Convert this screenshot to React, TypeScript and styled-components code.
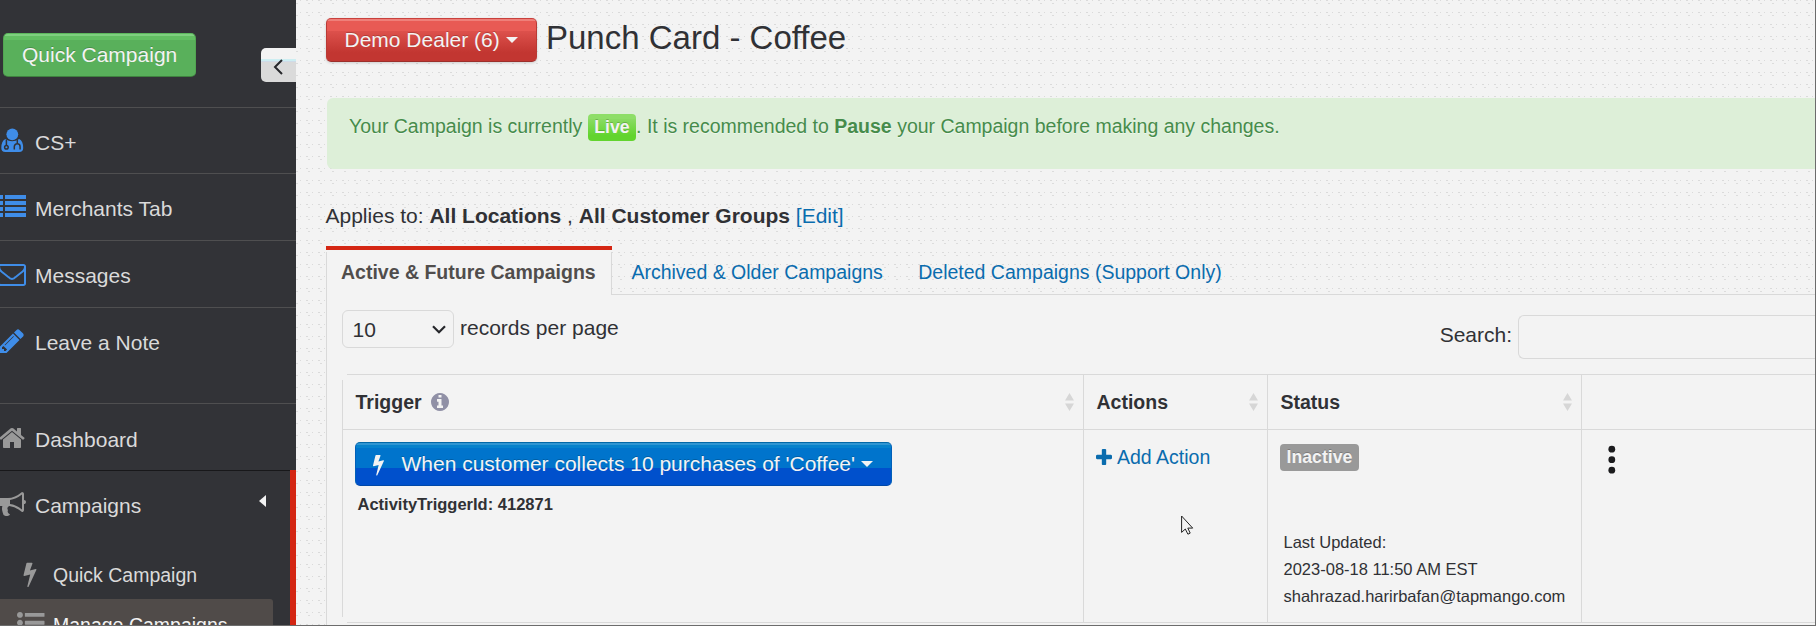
import React from "react";
import styled, { createGlobalStyle, css } from "styled-components";

const line = "#d9d9d9";
const paper = "#f3f3f3";

const Global = createGlobalStyle`
  * { box-sizing: border-box; }
  html, body, #root { height: 100%; }
  body {
    margin: 0;
    overflow: hidden;
    font-family: "Liberation Sans", Arial, sans-serif;
    font-size: 21px;
    line-height: 30px;
    color: #303135;
  }
`;

const Page = styled.div`
  display: flex;
  width: 1816px;
  height: 626px;
  overflow: hidden;
  border-right: 1px solid #6c6c6c;
  border-bottom: 1px solid #6c6c6c;
  background:
    conic-gradient(from 270deg at 1px 1px, #dadada 90deg, transparent 0) 0 0 / 12px 12px,
    conic-gradient(from 270deg at 2px 1px, #dadada 90deg, transparent 0) 6px 0 / 12px 12px,
    conic-gradient(from 270deg at 2px 1px, #dcdcdc 90deg, transparent 0) 8px 3px / 12px 12px,
    ${paper};
`;

const Sidebar = styled.aside`
  flex: 0 0 296px;
  height: 100%;
  overflow: hidden;
  background: #323337;
  color: #dadada;
`;

const SidebarTop = styled.div`
  display: flex;
  justify-content: space-between;
  align-items: flex-start;
  height: 107px;
  padding: 33px 0 0 3px;
`;

const Button = styled.button<{ $tone: "green" | "red" | "blue" }>`
  display: flex;
  align-items: center;
  flex: none;
  height: 44px;
  padding: 0 18px;
  border-radius: 5px;
  border: 1px solid;
  font-family: inherit;
  font-size: 21px;
  line-height: 30px;
  color: #f3f3f3;
  white-space: nowrap;
  ${(p) =>
    p.$tone === "green" &&
    css`
      width: 193px;
      border-color: #5cb85c #52a552 #3f823f;
      background: linear-gradient(#7fd07f 0 2px, #62bf62 2px 6px, #59b05b 6px);
    `}
  ${(p) =>
    p.$tone === "red" &&
    css`
      width: 211px;
      padding: 0 17.5px;
      border-color: #c8403c #b93a35 #9c2f2b;
      background: linear-gradient(#ef7f79 0 2px, #e85a54 2px 12px, #dd514c 12px, #c23631 80%);
      box-shadow: 0 1px 3px rgba(0, 0, 0, 0.16);
    `}
  ${(p) =>
    p.$tone === "blue" &&
    css`
      width: 537px;
      gap: 17.5px;
      padding: 0 17px;
      border-color: #0268a8 #0160b8 #0048a8;
      background: linear-gradient(#2f95d2 0 2px, #0682cc 2px 5px, #0074cc 5px 25px, #0050cc 25px);
    `}
`;

const ButtonText = styled.span`
  display: flex;
  align-items: center;
  text-shadow: 0 -1px 0 rgba(0, 0, 0, 0.2);
`;

const Caret = styled.i`
  margin: 0 0 1px 6px;
  border: 6px solid transparent;
  border-top-color: #f3f3f3;
  border-bottom: 0;
`;

const Collapse = styled.button`
  display: flex;
  align-items: center;
  width: 35px;
  height: 34px;
  margin-top: 15px;
  padding: 3px 0 0 12px;
  border: 0;
  border-radius: 5px 0 0 5px;
  background: linear-gradient(#f3f3f3 0 11px, #cdeef2 11px 13px, #cfdbe8 13px 14px, #dadada 14px);
`;

const Item = styled.a<{ $height?: number; $rule?: string; $top?: number }>`
  display: flex;
  align-items: flex-start;
  height: ${(p) => p.$height ?? 67}px;
  padding-top: ${(p) => p.$top ?? 19}px;
  border-top: 1px solid ${(p) => p.$rule ?? "#4f4f50"};
`;

const ItemIcon = styled.span`
  flex: 0 0 37px;
  height: 28px;
  margin-left: -2px;
  line-height: 0;
  svg { display: block; }
`;

const ItemText = styled.span`
  flex: 1;
  padding-top: 1px;
  white-space: nowrap;
`;

const OpenSection = styled.div`
  height: 160px;
  border-right: 6px solid #d42613;
`;

const OpenArrow = styled.i`
  margin: 5px 24px 0 0;
  border: 6px solid transparent;
  border-right: 7px solid #f3f3f3;
  border-left: 0;
`;

const SubItem = styled.a<{ $selected?: boolean }>`
  display: flex;
  align-items: flex-start;
  width: 273px;
  height: 50px;
  padding: 10px 0 0 17px;
  border-radius: 0 3px 0 0;
  font-size: 19.5px;
  background: ${(p) => (p.$selected ? "#504b49" : "transparent")};
  color: ${(p) => (p.$selected ? "#f3f3f3" : "#dadada")};
`;

const SubIcon = styled.span<{ $top: number }>`
  flex: 0 0 36px;
  padding-top: ${(p) => p.$top}px;
  line-height: 0;
`;

const Main = styled.main`
  flex: 1;
  min-width: 0;
  padding: 18px 0 0 30px;
`;

const TitleRow = styled.header`
  display: flex;
  height: 80px;
`;

const Title = styled.h1`
  margin: 1px 0 0 9px;
  font-size: 33px;
  font-weight: 400;
  line-height: 38px;
`;

const Alert = styled.div`
  height: 71px;
  margin-left: 1px;
  padding: 13px 22px;
  border-radius: 6px 0 0 6px;
  background: #ddefd8;
  color: #468c4b;
  font-size: 19.5px;
  line-height: 30px;
  letter-spacing: -0.005px;
  white-space: nowrap;
  text-shadow: 0 1px 0 rgba(255, 255, 255, 0.5);
`;

const Label = styled.span<{ $live?: boolean }>`
  display: inline-block;
  height: 27px;
  padding: 0 6.5px;
  border-radius: 4px;
  background: ${(p) => (p.$live ? "linear-gradient(#8ede68 0 5px, #8adb64 5px, #62d42e 80%)" : "#999")};
  color: #f3f3f3;
  font-size: 17.7px;
  font-weight: 700;
  line-height: 27px;
  vertical-align: top;
  text-shadow: 0 -1px 0 rgba(0, 0, 0, 0.2);
`;

const LabelSlot = styled.span<{ $top: number }>`
  display: inline-block;
  height: 30px;
  padding-top: ${(p) => p.$top}px;
  line-height: 0;
  vertical-align: top;
`;

const Applies = styled.p`
  height: 77px;
  margin: 0 0 0 -0.5px;
  padding-top: 32px;
  white-space: pre;
`;

const Link = styled.a`
  color: #0a6cae;
`;

const Tabs = styled.nav`
  display: flex;
  height: 49px;
  font-size: 19.5px;
`;

const Tab = styled.a<{ $active?: boolean }>`
  padding: 11px 16px 0 19.4px;
  line-height: 30px;
  white-space: nowrap;
  color: #0a6cae;
  border-bottom: 1px solid ${line};
  ${(p) =>
    p.$active &&
    css`
      width: 286px;
      padding: 7px 0 0 15px;
      border: 0;
      border-top: 4px solid #d42613;
      background: linear-gradient(${line}, ${line}) 0 2px / 1px 100% no-repeat,
        linear-gradient(${line}, ${line}) 100% 2px / 1px 100% no-repeat, ${paper};
      color: #504d4c;
      font-weight: 700;
    `}
`;

const TabFill = styled.span`
  flex: 1;
  border-bottom: 1px solid ${line};
`;

const Panel = styled.section`
  height: 340px;
  padding: 15px 0 0 15px;
  border-left: 1px solid ${line};
  background: ${paper};
`;

const Controls = styled.div`
  display: flex;
  justify-content: space-between;
  height: 64px;
`;

const Group = styled.label`
  display: flex;
  align-items: flex-start;
`;

const PageSize = styled.span`
  display: flex;
  align-items: center;
  justify-content: space-between;
  width: 112px;
  height: 38px;
  margin-right: 6px;
  padding: 1px 7px 0 9.5px;
  border: 1px solid ${line};
  border-radius: 6px;
`;

const ControlText = styled.span<{ $top: number }>`
  padding-top: ${(p) => p.$top}px;
`;

const SearchInput = styled.input`
  width: 297px;
  height: 44px;
  margin: 5px 0 0 6px;
  border: 1px solid ${line};
  border-right: 0;
  border-radius: 6px 0 0 6px;
  background: ${paper};
`;

const Table = styled.div`
  display: grid;
  grid-template-columns: 741px 184px 314px 1fr;
  grid-template-rows: 55px 193px;
  height: 249px;
  font-size: 19.5px;
  background: linear-gradient(${line}, ${line}) 0 6px / 1px 237px no-repeat,
    linear-gradient(${line}, ${line}) 5px 0 / 100% 1px no-repeat,
    linear-gradient(${line}, ${line}) 5px 100% / 100% 1px no-repeat;
`;

const Head = styled.div<{ $first?: boolean }>`
  display: flex;
  align-items: center;
  padding: 0 9.5px 0 12.5px;
  border-left: 1px solid ${(p) => (p.$first ? "transparent" : line)};
  font-weight: 700;
  svg:last-child { margin-left: auto; }
`;

const Cell = styled.div<{ $first?: boolean }>`
  padding: 12px 0 0 12px;
  border-top: 1px solid ${line};
  border-left: 1px solid ${(p) => (p.$first ? "transparent" : line)};
`;

const InfoMark = styled.span`
  margin-left: 9px;
  line-height: 0;
`;

const TriggerId = styled.div`
  margin-top: 3px;
  padding-left: 2.5px;
  font-size: 16.5px;
  font-weight: 700;
  line-height: 30px;
`;

const AddAction = styled(Link)`
  display: flex;
  align-items: center;
  gap: 5px;
  height: 30px;
`;

const Updated = styled.div`
  margin-top: 57px;
  padding-left: 3.5px;
  font-size: 16.5px;
  line-height: 27px;
  white-space: nowrap;
`;

const Pointer = styled.svg`
  position: absolute;
  left: 1181px;
  top: 515px;
`;

const icons = {
  envelope:
    "M1664 1504v-768q-32 36-69 66-268 206-426 338-51 43-83 67t-86.5 48.5-102.5 24.5h-2q-48 0-102.5-24.5t-86.5-48.5-83-67q-158-132-426-338-37-30-69-66v768q0 13 9.5 22.5t22.5 9.5h1472q13 0 22.5-9.5t9.5-22.5zm0-1051v-24.5l-.5-13-3-12.5-5.5-9-9-7.5-14-2.5h-1472q-13 0-22.5 9.5t-9.5 22.5q0 168 147 284 193 152 401 317 6 5 35 29.5t46 37.5 44.5 31.5 50.5 27.5 43 9h2q20 0 43-9t50.5-27.5 44.5-31.5 46-37.5 35-29.5q208-165 401-317 54-43 100.5-115.5t46.5-131.5zm128-37v1088q0 66-47 113t-113 47h-1472q-66 0-113-47t-47-113v-1088q0-66 47-113t113-47h1472q66 0 113 47t47 113z",
  pencil:
    "M491 1536l91-91-235-235-91 91v107h128v128h107zm523-928q0-22-22-22-10 0-17 7l-542 542q-7 7-7 17 0 22 22 22 10 0 17-7l542-542q7-7 7-17zm-54-192l416 416-832 832h-416v-416zm683 96q0 53-37 90l-166 166-416-416 166-165q36-38 90-38 53 0 91 38l235 234q37 39 37 91z",
  home:
    "M1472 992v480q0 26-19 45t-45 19h-384v-384h-256v384h-384q-26 0-45-19t-19-45v-480q0-1 .5-3t.5-3l575-474 575 474q1 2 1 6zm223-69l-62 74q-8 9-21 11h-3q-13 0-21-7l-692-577-692 577q-12 8-24 7-13-2-21-11l-62-74q-8-10-7-23.5t11-21.5l719-599q32-26 76-26t76 26l244 204v-195q0-14 9-23t23-9h192q14 0 23 9t9 23v408l219 182q10 8 11 21.5t-7 23.5z",
  bullhorn:
    "M1664 640q53 0 90.5 37.5t37.5 90.5-37.5 90.5-90.5 37.5v384q0 52-38 90t-90 38q-417-347-812-380-58 19-91 66t-31 100.5 40 92.5q-20 33-23 65.5t6 58 33.5 55 48 50 61.5 50.5q-29 58-111.5 83t-168.5 11.5-132-55.5q-7-23-29.5-87.5t-32-94.5-23-89-15-101 3.5-98.5 22-110.5h-122q-66 0-113-47t-47-113v-192q0-66 47-113t113-47h480q435 0 896-384 52 0 90 38t38 90v384zm-128 604v-954q-394 302-768 343v270q377 42 768 341z",
  bolt:
    "M1333 566q18 20 7 44l-540 1157q-13 25-42 25-4 0-14-2-17-5-25.5-19t-4.5-30l197-808-406 101q-4 1-12 1-18 0-31-11-18-15-13-39l201-825q4-14 16-23t28-9h328q19 0 32 12.5t13 29.5q0 8-5 18l-171 463 396-98q8-2 12-2 19 0 34 15z",
  listUl:
    "M384 1408q0 80-56 136t-136 56-136-56-56-136 56-136 136-56 136 56 56 136zm0-512q0 80-56 136t-136 56-136-56-56-136 56-136 136-56 136 56 56 136zm1408 416v192q0 13-9.5 22.5t-22.5 9.5h-1216q-13 0-22.5-9.5t-9.5-22.5v-192q0-13 9.5-22.5t22.5-9.5h1216q13 0 22.5 9.5t9.5 22.5zm-1408-928q0 80-56 136t-136 56-136-56-56-136 56-136 136-56 136 56 56 136zm1408 416v192q0 13-9.5 22.5t-22.5 9.5h-1216q-13 0-22.5-9.5t-9.5-22.5v-192q0-13 9.5-22.5t22.5-9.5h1216q13 0 22.5 9.5t9.5 22.5zm0-512v192q0 13-9.5 22.5t-22.5 9.5h-1216q-13 0-22.5-9.5t-9.5-22.5v-192q0-13 9.5-22.5t22.5-9.5h1216q13 0 22.5 9.5t9.5 22.5z",
  info:
    "M1152 1376v-160q0-14-9-23t-23-9h-96v-512q0-14-9-23t-23-9h-320q-14 0-23 9t-9 23v160q0 14 9 23t23 9h96v320h-96q-14 0-23 9t-9 23v160q0 14 9 23t23 9h448q14 0 23-9t9-23zm-128-896v-160q0-14-9-23t-23-9h-192q-14 0-23 9t-9 23v160q0 14 9 23t23 9h192q14 0 23-9t9-23zm640 416q0 209-103 385.5t-279.5 279.5-385.5 103-385.5-103-279.5-279.5-103-385.5 103-385.5 279.5-279.5 385.5-103 385.5 103 279.5 279.5 103 385.5z",
  plus:
    "M1600 736v192q0 40-28 68t-68 28h-416v416q0 40-28 68t-68 28h-192q-40 0-68-28t-28-68v-416h-416q-40 0-68-28t-28-68v-192q0-40 28-68t68-28h416v-416q0-40 28-68t68-28h192q40 0 68 28t28 68v416h416q40 0 68 28t28 68z",
};

const blue = "#3f8de8";
const grey = "#999";

/* Icon drawn on the 1792-unit grid; `box` crops the grid to the glyph. */
const Icon = ({ d, fill, w, h, box = "0 0 1792 1792" }: { d: string; fill: string; w: number; h: number; box?: string }) => (
  <svg width={w} height={h} viewBox={box} fill={fill}>
    <path d={d} />
  </svg>
);

const Doctor = () => (
  <svg width="26" height="26" viewBox="-2 -1 26 26">
    <path fill={blue} d="M5.4 11Q12 15.4 19.2 11Q23.2 13 23.2 20Q23.2 24 19.2 24H5.3Q1.3 24 1.3 20Q1.3 13 5.4 11Z" />
    <circle cx="12.3" cy="6.3" r="5.9" fill={blue} />
    <g fill="none" stroke="#323337" strokeWidth="1.5">
      <path d="M6.4 11.5v6" />
      <circle cx="6.4" cy="19.2" r="1.8" />
      <path d="M17.3 11.5v3.8M14.3 21.5v-2.8a2.9 2.9 0 0 1 5.8 0v2.8" />
    </g>
  </svg>
);

const Rows = () => (
  <svg width="28" height="25" viewBox="-2 0 28 25" fill={blue}>
    {[2, 8, 14, 20].map((y) => (
      <path key={y} d={`M-2 ${y}h5v4H-2zM5 ${y}H26v4H5z`} />
    ))}
  </svg>
);

const Sort = () => (
  <svg width="9" height="18" viewBox="0 0 9 18" fill="#d6d6d6">
    <path d="M0 7.5L4.5 0 9 7.5zM0 10.5L4.5 18 9 10.5z" />
  </svg>
);

export default function App() {
  return (
    <>
      <Global />
      <Page>
        <Sidebar>
          <SidebarTop>
            <Button $tone="green">
              <ButtonText>Quick Campaign</ButtonText>
            </Button>
            <Collapse>
              <svg width="10" height="16" viewBox="0 0 10 16" fill="none" stroke="#26272b" strokeWidth="2">
                <path d="M9 1L2 8l7 7" />
              </svg>
            </Collapse>
          </SidebarTop>
          <Item $height={66}>
            <ItemIcon><Doctor /></ItemIcon>
            <ItemText>CS+</ItemText>
          </Item>
          <Item>
            <ItemIcon><Rows /></ItemIcon>
            <ItemText>Merchants Tab</ItemText>
          </Item>
          <Item>
            <ItemIcon><Icon d={icons.envelope} fill={blue} w={28} h={28} /></ItemIcon>
            <ItemText>Messages</ItemText>
          </Item>
          <Item $height={96}>
            <ItemIcon><Icon d={icons.pencil} fill={blue} w={28} h={28} /></ItemIcon>
            <ItemText>Leave a Note</ItemText>
          </Item>
          <Item $top={20}>
            <ItemIcon><Icon d={icons.home} fill={grey} w={28} h={28} /></ItemIcon>
            <ItemText>Dashboard</ItemText>
          </Item>
          <OpenSection>
            <Item $height={79} $rule="#18181a">
              <ItemIcon><Icon d={icons.bullhorn} fill={grey} w={28} h={28} /></ItemIcon>
              <ItemText>Campaigns</ItemText>
              <OpenArrow />
            </Item>
            <SubItem>
              <SubIcon $top={2}><Icon d={icons.bolt} fill={grey} w={26} h={26} /></SubIcon>
              <ItemText>Quick Campaign</ItemText>
            </SubItem>
            <SubItem $selected>
              <SubIcon $top={0}><Icon d={icons.listUl} fill={grey} w={27.5} h={27.5} /></SubIcon>
              <ItemText>Manage Campaigns</ItemText>
            </SubItem>
          </OpenSection>
        </Sidebar>

        <Main>
          <TitleRow>
            <Button $tone="red">
              <ButtonText>
                Demo Dealer (6)
                <Caret />
              </ButtonText>
            </Button>
            <Title>Punch Card - Coffee</Title>
          </TitleRow>

          <Alert>
            Your Campaign is currently{" "}
            <LabelSlot $top={3}><Label $live>Live</Label></LabelSlot>. It is recommended to <b>Pause</b> your Campaign
            before making any changes.
          </Alert>

          <Applies>
            Applies to: <b>All Locations</b> , <b>All Customer Groups</b> <Link>[Edit]</Link>
          </Applies>

          <Tabs>
            <Tab $active>Active &amp; Future Campaigns</Tab>
            <Tab>Archived &amp; Older Campaigns</Tab>
            <Tab>Deleted Campaigns (Support Only)</Tab>
            <TabFill />
          </Tabs>

          <Panel>
            <Controls>
              <Group>
                <PageSize>
                  10
                  <svg width="14" height="9" viewBox="0 0 14 9" fill="none" stroke="#26272b" strokeWidth="2.2">
                    <path d="M1 1.2l6 6 6-6" />
                  </svg>
                </PageSize>
                <ControlText $top={3}>records per page</ControlText>
              </Group>
              <Group>
                <ControlText $top={10}>Search:</ControlText>
                <SearchInput />
              </Group>
            </Controls>

            <Table>
              <Head $first>
                Trigger
                <InfoMark>
                  <Icon d={icons.info} fill="#9090a6" w={18} h={18} box="128 128 1536 1536" />
                </InfoMark>
                <Sort />
              </Head>
              <Head>Actions<Sort /></Head>
              <Head>Status<Sort /></Head>
              <Head />
              <Cell $first>
                <Button $tone="blue">
                  <Icon d={icons.bolt} fill="#f3f3f3" w={11} h={23} box="448 0 900 1792" />
                  <ButtonText>
                    When customer collects 10 purchases of 'Coffee'
                    <Caret />
                  </ButtonText>
                </Button>
                <TriggerId>ActivityTriggerId: 412871</TriggerId>
              </Cell>
              <Cell>
                <AddAction>
                  <Icon d={icons.plus} fill="#0a6cae" w={16} h={16} box="192 128 1408 1408" />
                  Add Action
                </AddAction>
              </Cell>
              <Cell>
                <LabelSlot $top={2}><Label>Inactive</Label></LabelSlot>
                <Updated>
                  Last Updated:
                  <br />
                  2023-08-18 11:50 AM EST
                  <br />
                  shahrazad.harirbafan@tapmango.com
                </Updated>
              </Cell>
              <Cell>
                <svg width="60" height="36" viewBox="0 0 60 36" fill="#1b1b1d">
                  <circle cx="17.8" cy="7.2" r="3.4" />
                  <circle cx="17.8" cy="17.7" r="3.4" />
                  <circle cx="17.8" cy="28.2" r="3.4" />
                </svg>
              </Cell>
            </Table>
          </Panel>
        </Main>
      </Page>
      <Pointer width="13" height="20" viewBox="0 0 13 20">
        <path d="M.6 1v16.4l3.7-3.4 2.6 5.2 2.3-1.1-2.4-5h4.9z" fill={paper} stroke="#222" strokeWidth="1" />
      </Pointer>
    </>
  );
}
